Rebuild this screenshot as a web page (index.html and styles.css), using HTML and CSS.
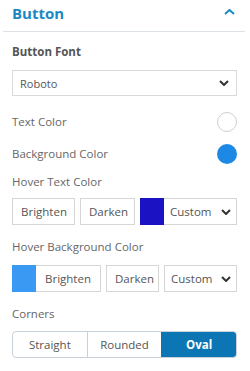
FILE: index.html
```html
<!DOCTYPE html>
<html lang="en">

<head>
    <meta charset="UTF-8">
    <meta name="viewport" content="width=device-width, initial-scale=1.0">
    <title>Button Settings</title>
    <link rel="stylesheet" href="styles.css">
</head>

<body>
    <div class="panel">
        <div class="panel-head">
            <span class="panel-title">Button</span>
            <svg class="chev-up" width="11" height="6" viewBox="0 0 11 6"><polyline points="1,5 5.5,1 10,5" /></svg>
        </div>
        <div class="panel-body">
            <div class="field-title">Button Font</div>
            <div class="select font-select">
                <span>Roboto</span>
                <svg class="chev-down" width="10" height="6" viewBox="0 0 10 6"><polyline points="1,1 5,5 9,1" /></svg>
            </div>

            <div class="color-row first">
                <span class="label">Text Color</span>
                <span class="dot dot-white"></span>
            </div>
            <div class="color-row">
                <span class="label">Background Color</span>
                <span class="dot dot-blue"></span>
            </div>

            <div class="label block hover-text">Hover Text Color</div>
            <div class="btn-row row1">
                <button class="btn">Brighten</button>
                <button class="btn">Darken</button>
                <div class="swatch-select">
                    <span class="swatch swatch-dark"></span>
                    <div class="mini-select">
                        <span>Custom</span>
                        <svg class="chev-down" width="10" height="6" viewBox="0 0 10 6"><polyline points="1,1 5,5 9,1" /></svg>
                    </div>
                </div>
            </div>

            <div class="label block hover-bg">Hover Background Color</div>
            <div class="btn-row row2">
                <div class="swatch-btn">
                    <span class="swatch swatch-light"></span>
                    <button class="btn btn-joined">Brighten</button>
                </div>
                <button class="btn">Darken</button>
                <div class="mini-select solo">
                    <span>Custom</span>
                    <svg class="chev-down" width="10" height="6" viewBox="0 0 10 6"><polyline points="1,1 5,5 9,1" /></svg>
                </div>
            </div>

            <div class="label block corners">Corners</div>
            <div class="segments">
                <div class="seg">Straight</div>
                <div class="seg">Rounded</div>
                <div class="seg active">Oval</div>
            </div>
        </div>
    </div>
</body>

</html>
```

FILE: styles.css
```css
body {
    margin: 0;
    background-color: white;
    font-family: "Open Sans", "Liberation Sans", sans-serif;
    font-size: 11.5px;
    color: #666;
}

.panel {
    width: 250px;
}

.panel-head {
    height: 32px;
    margin: 0 5px 0 3px;
    padding: 3px 10px 0 9px;
    box-sizing: border-box;
    border-bottom: 1px solid #dde2e8;
    display: flex;
    justify-content: space-between;
    align-items: flex-start;
}

.panel-title {
    font-size: 15px;
    line-height: 20px;
    font-weight: bold;
    color: #1b88c6;
}

.chev-up {
    margin-top: 6px;
    fill: none;
    stroke: #1b88c6;
    stroke-width: 2;
}

.chev-down {
    fill: none;
    stroke: #333;
    stroke-width: 2;
}

.panel-body {
    padding: 0 13px 0 12px;
}

.field-title {
    margin-top: 12px;
    line-height: 16px;
    font-weight: bold;
    color: #555;
}

.select {
    margin-top: 10px;
    height: 26px;
    box-sizing: border-box;
    border: 1px solid #d9d9d9;
    display: flex;
    align-items: center;
    justify-content: space-between;
    padding: 0 7px 0 7px;
    font-size: 11px;
    color: #555;
}

.label {
    line-height: 16px;
    color: #666;
}

.block {
    display: block;
}

.color-row {
    display: flex;
    justify-content: space-between;
    align-items: center;
    height: 20px;
    margin-top: 12px;
}

.color-row.first {
    margin-top: 16px;
}

.dot {
    width: 20px;
    height: 20px;
    box-sizing: border-box;
    border-radius: 50%;
}

.dot-white {
    border: 1px solid #cfcfcf;
    background-color: white;
}

.dot-blue {
    background-color: #1e88e5;
}

.hover-text {
    margin-top: 10px;
}

.btn-row {
    display: flex;
    gap: 5px;
    height: 27px;
    margin-top: 8px;
}

.btn {
    height: 27px;
    box-sizing: border-box;
    border: 1px solid #d6d6d6;
    background-color: white;
    padding: 0 8px;
    font-family: inherit;
    font-size: 11.5px;
    color: #555;
}

.swatch-select,
.swatch-btn {
    display: flex;
    flex: 1;
}

.swatch {
    width: 24px;
    flex-shrink: 0;
}

.swatch-dark {
    background-color: #1b12c4;
}

.swatch-light {
    background-color: #3a9af3;
}

.btn-joined {
    flex: 1;
    border-left: none;
}

.mini-select {
    flex: 1;
    box-sizing: border-box;
    border: 1px solid #d6d6d6;
    border-left: none;
    display: flex;
    align-items: center;
    justify-content: space-between;
    padding: 0 5px 0 6px;
    color: #555;
}

.mini-select.solo {
    flex: none;
    width: 73px;
    border-left: 1px solid #d6d6d6;
}

.row1 .btn:first-child {
    width: 63px;
}

.row1 .btn:nth-child(2) {
    width: 55px;
}

.row2 .btn:nth-child(2) {
    width: 53px;
}

.hover-bg {
    margin-top: 14px;
}

.row2 {
    margin-top: 10px;
}

.corners {
    margin-top: 14px;
}

.segments {
    margin-top: 9px;
    height: 27px;
    display: flex;
    border: 1px solid #c8d0da;
    border-radius: 4px;
    overflow: hidden;
    box-sizing: border-box;
}

.seg {
    flex: 1;
    display: flex;
    align-items: center;
    justify-content: center;
    color: #555;
    border-left: 1px solid #c8d0da;
}

.seg:first-child {
    border-left: none;
}

.seg.active {
    background-color: #0b76b3;
    border-left-color: #0b76b3;
    color: white;
    font-weight: bold;
}
```
